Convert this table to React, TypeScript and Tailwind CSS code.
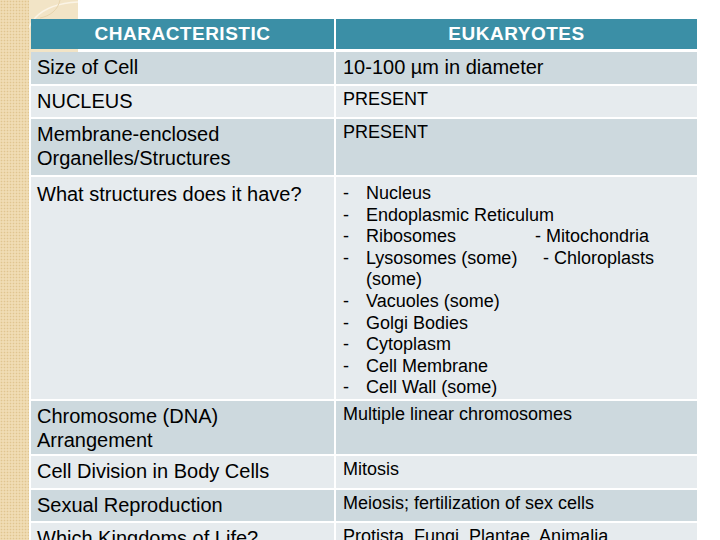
import React from "react";

type Row = {
  label: string[];
  value: React.ReactNode;
  h: string;
  dark: boolean;
  pl?: string;
  pr?: string;
};

const structures: { text: string; extra?: string; extraW?: string; dash?: boolean }[] = [
  { text: "Nucleus", dash: true },
  { text: "Endoplasmic Reticulum", dash: true },
  { text: "Ribosomes", extra: "- Mitochondria", extraW: "w-[169px]", dash: true },
  { text: "Lysosomes (some)", extra: "- Chloroplasts", extraW: "w-[177px]", dash: true },
  { text: "(some)", dash: false },
  { text: "Vacuoles (some)", dash: true },
  { text: "Golgi Bodies", dash: true },
  { text: "Cytoplasm", dash: true },
  { text: "Cell Membrane", dash: true },
  { text: "Cell Wall (some)", dash: true },
];

function StructureList() {
  return (
    <div className="flex flex-col text-[18px] leading-[21.6px]">
      {structures.map((s) => (
        <div key={s.text} className="grid grid-cols-[23px_1fr]">
          <span>{s.dash ? "-" : ""}</span>
          <span className="whitespace-nowrap">
            {s.extra ? (
              <>
                <span className={`inline-block ${s.extraW}`}>{s.text}</span>
                <span>{s.extra}</span>
              </>
            ) : (
              s.text
            )}
          </span>
        </div>
      ))}
    </div>
  );
}

const rows: Row[] = [
  { label: ["Size of Cell"], value: <span className="text-[20px] leading-6">10-100 µm in diameter</span>, h: "h-[32px]", dark: true },
  { label: ["NUCLEUS"], value: "PRESENT", h: "h-[31px]", dark: false },
  { label: ["Membrane-enclosed", "Organelles/Structures"], value: "PRESENT", h: "h-[56px]", dark: true },
  { label: ["What structures does it have?"], value: <StructureList />, h: "h-[222px]", dark: false, pl: "pt-[5px]", pr: "pt-[6px]" },
  { label: ["Chromosome (DNA)", "Arrangement"], value: "Multiple linear chromosomes", h: "h-[53px]", dark: true },
  { label: ["Cell Division in Body Cells"], value: "Mitosis", h: "h-[32px]", dark: false },
  { label: ["Sexual Reproduction"], value: "Meiosis; fertilization of sex cells", h: "h-[31px]", dark: true },
  { label: ["Which Kingdoms of Life?"], value: "Protista, Fungi, Plantae, Animalia", h: "h-[40px]", dark: false },
];

export default function App() {
  return (
    <div className="relative flex h-[540px] w-[720px] overflow-hidden bg-white font-['Liberation_Sans',Arial,sans-serif] text-black">
      {/* beige corner decoration */}
      <div className="absolute left-0 top-0 h-[60px] w-[78px] bg-[#f2e4c6]">
        <svg width="78" height="60" viewBox="0 0 78 60" className="absolute left-0 top-0">
          <path d="M78 2 C40 4 20 22 26 60" fill="none" stroke="#fbf4e6" strokeWidth="1.5" />
          <path d="M60 0 C58 10 50 16 40 18" fill="none" stroke="#e7d4ad" strokeWidth="1" />
        </svg>
      </div>

      {/* textured left strip */}
      <div className="relative h-full w-[29px] shrink-0 bg-[#f0dcb4] bg-[radial-gradient(#e0c590_0.7px,transparent_1.1px)] bg-[length:3px_3px]" />

      <div className="relative ml-[2px] mt-[19px]">
        <div className="grid grid-cols-[303px_361px] gap-x-[2px] gap-y-[2px]">
          <div className="mb-[1px] flex h-[30px] items-center justify-center bg-[#3b8fa6] text-[19px] font-bold tracking-[0.5px] text-white">
            CHARACTERISTIC
          </div>
          <div className="mb-[1px] flex h-[30px] items-center justify-center bg-[#3b8fa6] text-[19px] font-bold tracking-[0.5px] text-white">
            EUKARYOTES
          </div>

          {rows.map((r) => {
            const bg = r.dark ? "bg-[#cdd9de]" : "bg-[#e6ebee]";
            return (
              <React.Fragment key={r.label.join(" ")}>
                <div className={`${r.h} ${bg} pl-[6px] ${r.pl ?? "pt-[3px]"} text-[20px] leading-6`}>
                  {r.label.map((l) => (
                    <div key={l}>{l}</div>
                  ))}
                </div>
                <div className={`${bg} pl-[7px] ${r.pr ?? "pt-[3px]"} text-[18px] leading-[21.6px]`}>
                  {r.value}
                </div>
              </React.Fragment>
            );
          })}
        </div>
      </div>
    </div>
  );
}
